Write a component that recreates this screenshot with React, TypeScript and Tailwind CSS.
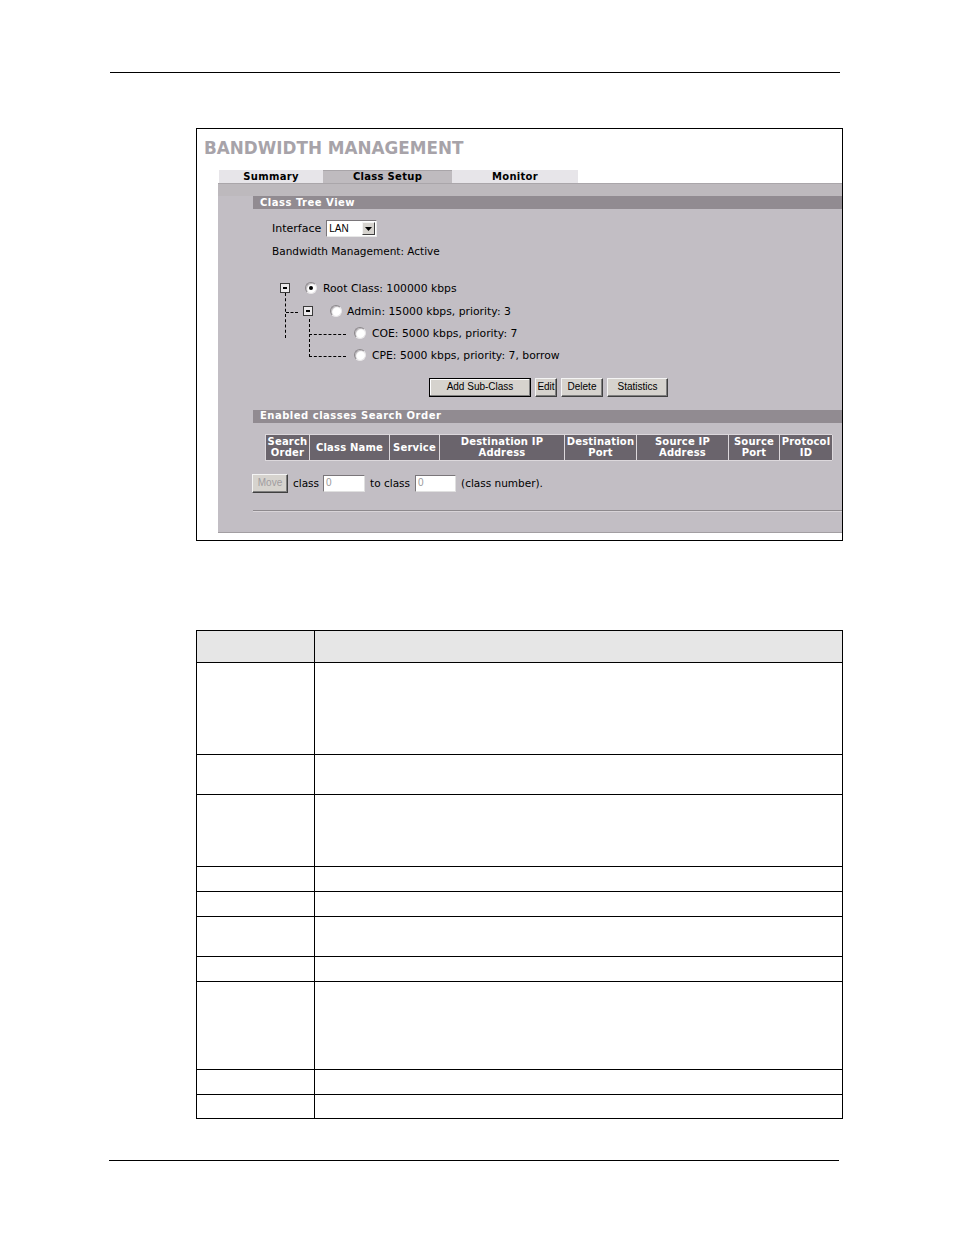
import type { ReactNode } from 'react'

const UI = "font-['DejaVu_Sans',Verdana,sans-serif]"
const BTN = "font-['Liberation_Sans',Arial,sans-serif]"

function SectionHeader({ children }: { children: ReactNode }) {
  return <div className={`ml-[35px] flex h-[13px] items-center bg-[#918b91] pl-[7px] text-[10px] font-bold leading-none tracking-[0.5px] text-white ${UI}`}>{children}</div>
}

function Radio({ checked = false }: { checked?: boolean }) {
  return (
    <span className="mb-[3px] flex h-[12px] w-[12px] shrink-0 items-center justify-center rounded-full border border-[#8a868a] border-b-[#e8e6e8] border-r-[#e8e6e8] bg-white shadow-[inset_1px_1px_1px_#b8b4b8]">
      {checked && <span className="h-[4px] w-[4px] rounded-full bg-black" />}
    </span>
  )
}

function Expander() {
  return (
    <span className="mb-[3px] flex h-[10px] w-[10px] shrink-0 items-center justify-center border border-[#3a3a3a] bg-[#ebe9eb]">
      <span className="h-[2px] w-[4px] bg-black" />
    </span>
  )
}

function Button({ children, primary = false, disabled = false, className = '' }: { children: ReactNode; primary?: boolean; disabled?: boolean; className?: string }) {
  return (
    <span
      className={`flex h-[19px] items-center justify-center border bg-[#d6d3ce] text-[10px] leading-none ${BTN} ${
        primary ? 'border-black shadow-[inset_-1px_-1px_0_#808080,inset_1px_1px_0_#ffffff]' : 'border-[#f4f4f4] border-b-[#404040] border-r-[#404040] shadow-[inset_-1px_-1px_0_#808080]'
      } ${disabled ? 'text-[#a09ca0]' : 'text-black'} ${className}`}
    >
      {children}
    </span>
  )
}

function TextInput({ className = '' }: { className?: string }) {
  return (
    <span className={`flex h-[17px] items-center border border-[#7a767a] border-b-[#e0e0e0] border-r-[#e0e0e0] bg-white pl-[2px] text-[10px] leading-none text-[#9a9a9a] ${BTN} ${className}`}>0</span>
  )
}

const COLUMNS: { label: [string, string]; width: number }[] = [
  { label: ['Search', 'Order'], width: 44 },
  { label: ['Class Name', ''], width: 80 },
  { label: ['Service', ''], width: 50 },
  { label: ['Destination IP', 'Address'], width: 125 },
  { label: ['Destination', 'Port'], width: 72 },
  { label: ['Source IP', 'Address'], width: 92 },
  { label: ['Source', 'Port'], width: 51 },
  { label: ['Protocol', 'ID'], width: 53 },
]

const ROW_HEIGHTS = [31, 92, 40, 72, 25, 25, 40, 25, 88, 25, 24]

export default function App() {
  return (
    <div className="h-[1235px] w-[954px] overflow-hidden bg-white pt-[72px]">
      <div className="ml-[110px] w-[730px] border-t border-black" />

      <div className="ml-[196px] mt-[55px] flex h-[413px] w-[647px] flex-col overflow-hidden border border-black bg-white">
        <div className={`h-[41px] pl-[7px] pt-[11px] text-[16.8px] font-bold leading-[17px] text-[#a7a3a9] ${UI}`}>BANDWIDTH MANAGEMENT</div>

        <div className={`ml-[22px] flex h-[13px] text-[10px] font-bold leading-none tracking-[0.3px] text-black ${UI}`}>
          <div className="flex w-[104px] items-center justify-center bg-[#e7e5e9] pt-[1px]">Summary</div>
          <div className="flex w-[129px] items-center justify-center border-t border-[#a9a5a9] bg-[#bfbbbf]">Class Setup</div>
          <div className="flex w-[126px] items-center justify-center bg-[#e7e5e9] pt-[1px]">Monitor</div>
        </div>

        <div className={`ml-[21px] h-[350px] border-b border-[#a29ea2] bg-[#c2bec4] text-[10.5px] text-black ${UI}`}>
          <div className="h-[13px] border-t border-[#aaa6aa] bg-[#bdb9bd]" />
          <SectionHeader>Class Tree View</SectionHeader>

          <div className="ml-[54px] mt-[11px] flex h-[17px] items-center">
            <span className="text-[11px] leading-none">Interface</span>
            <span className="ml-[5px] flex h-[17px] w-[51px] items-center justify-between border border-[#7a767a] border-b-[#e8e8e8] border-r-[#e8e8e8] bg-white pl-[2px] pr-[1px]">
              <span className={`text-[10px] leading-none ${BTN}`}>LAN</span>
              <span className="flex h-[13px] w-[13px] items-center justify-center border border-[#f4f4f4] border-b-[#404040] border-r-[#404040] bg-[#d6d3ce]">
                <svg width="7" height="4" viewBox="0 0 7 4">
                  <path d="M0 0h7L3.5 4z" fill="black" />
                </svg>
              </span>
            </span>
          </div>

          <div className="ml-[54px] mt-[9px] leading-none">Bandwidth Management: Active</div>

          <div className="relative mt-[22px] text-[10.8px] leading-none">
            <span className="absolute left-[67px] top-[14px] h-[45px] border-l border-dashed border-black" />
            <span className="absolute left-[68px] top-[33px] w-[12px] border-t border-dashed border-black" />
            <span className="absolute left-[91px] top-[40px] h-[38px] border-l border-dashed border-black" />
            <span className="absolute left-[91px] top-[55px] w-[37px] border-t border-dashed border-black" />
            <span className="absolute left-[91px] top-[77px] w-[37px] border-t border-dashed border-black" />

            <div className="flex h-[22px] items-center pl-[62px]">
              <Expander />
              <span className="ml-[15px] flex"><Radio checked /></span>
              <span className="ml-[6px]">Root Class: 100000 kbps</span>
            </div>
            <div className="flex h-[23px] items-center pl-[85px]">
              <Expander />
              <span className="ml-[17px] flex"><Radio /></span>
              <span className="ml-[5px]">Admin: 15000 kbps, priority: 3</span>
            </div>
            <div className="flex h-[22px] items-center pl-[136px]">
              <Radio />
              <span className="ml-[6px]">COE: 5000 kbps, priority: 7</span>
            </div>
            <div className="flex h-[22px] items-center pl-[136px]">
              <Radio />
              <span className="ml-[6px]">CPE: 5000 kbps, priority: 7, borrow</span>
            </div>
          </div>

          <div className="ml-[211px] mt-[10px] flex gap-[4px]">
            <Button primary className="w-[102px]">Add Sub-Class</Button>
            <Button className="w-[22px]">Edit</Button>
            <Button className="w-[42px]">Delete</Button>
            <Button className="w-[61px]">Statistics</Button>
          </div>

          <div className="mt-[13px]">
            <SectionHeader>Enabled classes Search Order</SectionHeader>
          </div>

          <div className="ml-[47px] mt-[11px] flex h-[27px] w-[567px] border-b border-l border-t border-[#dcd8dc]">
            {COLUMNS.map((column) => (
              <div
                key={column.label.join(' ')}
                style={{ width: column.width }}
                className="flex shrink-0 flex-col items-center justify-center border-r border-[#dcd8dc] bg-[#6a646c] text-[10px] font-bold leading-[11px] tracking-[0.2px] text-white"
              >
                <span>{column.label[0]}</span>
                {column.label[1] && <span>{column.label[1]}</span>}
              </div>
            ))}
          </div>

          <div className="ml-[34px] mt-[13px] flex h-[19px] items-center">
            <Button disabled className="w-[36px]">Move</Button>
            <span className="ml-[5px] leading-none">class</span>
            <TextInput className="ml-[4px] w-[42px]" />
            <span className="ml-[5px] leading-none">to class</span>
            <TextInput className="ml-[5px] w-[41px]" />
            <span className="ml-[5px] leading-none">(class number).</span>
          </div>

          <div className="ml-[35px] mt-[17px] border-t border-[#8e8a8e] shadow-[0_1px_0_#d8d4d8]" />
        </div>
      </div>

      <div className="ml-[196px] mt-[89px] w-[647px] border border-black">
        {ROW_HEIGHTS.map((height, index) => (
          <div key={index} style={{ height }} className={`flex ${index > 0 ? 'border-t border-black' : 'bg-[#e6e6e6]'}`}>
            <div className="w-[118px] border-r border-black" />
            <div className="flex-1" />
          </div>
        ))}
      </div>

      <div className="ml-[109px] mt-[41px] w-[730px] border-t border-black" />
    </div>
  )
}
